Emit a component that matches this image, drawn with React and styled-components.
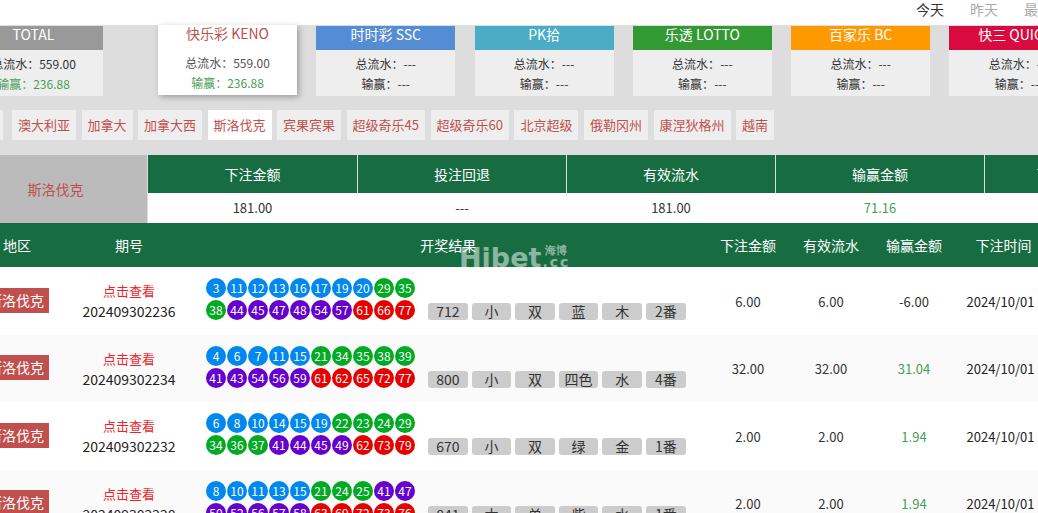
import React from "react"
import styled, { createGlobalStyle } from "styled-components"

const GlobalStyle = createGlobalStyle`
  html, body {
    margin: 0;
    padding: 0;
    background: #fff;
    overflow: hidden;
  }
  body {
    font-family: "Noto Sans CJK SC", "Noto Sans", sans-serif;
    font-size: 13px;
    color: #222;
  }
`

const Viewport = styled.div`
  height: 513px;
  overflow: hidden;
  position: relative;
  width: 1038px;
`

// The page is wider than the window and scrolled a little to the right.
const Page = styled.div`
  margin-left: -36px;
  width: 1300px;
`

const DateTabs = styled.div`
  display: flex;
  font-size: 14px;
  gap: 26px;
  height: 25px;
  line-height: 18px;
  padding-left: 952px;
`

const DateTab = styled.div`
  color: ${(p) => (p.$active ? "#333" : "#aaa")};
  white-space: nowrap;
`

const Summary = styled.div`
  background: #ddd;
  height: 130px;
`

const Cards = styled.div`
  display: flex;
  gap: 19.3px;
  height: 85px;
`

const Card = styled.div`
  background: ${(p) => (p.$active ? "#fff" : "#eee")};
  box-shadow: ${(p) => (p.$active ? "2px 2px 6px rgba(0, 0, 0, 0.3)" : "none")};
  flex: 0 0 139px;
  height: 70px;
  margin-right: ${(p) => (p.$first ? "35.7px" : "0")};
  margin-top: ${(p) => (p.$active ? "0" : "1px")};
  text-align: center;
`

const CardTitle = styled.div`
  background: ${(p) => p.$color || "transparent"};
  color: ${(p) => (p.$color ? "#fff" : "#c0504d")};
  font-size: 14px;
  height: 24px;
  line-height: ${(p) => (p.$color ? "17px" : "16px")};
  white-space: nowrap;
`

const CardLine = styled.div`
  color: ${(p) => (p.$win ? "#4a9e55" : p.$active ? "#555" : "#333")};
  font-size: 12px;
  height: 20px;
  line-height: 20px;
  margin-top: ${(p) => (p.$lead ? "4px" : "0")};
`

const Regions = styled.div`
  display: flex;
  gap: 5.5px;
  padding-left: 1px;
`

const Region = styled.div`
  background: ${(p) => (p.$active ? "#fff" : "#eee")};
  color: #c0504d;
  font-size: 13px;
  height: 30px;
  line-height: 30px;
  padding: 0 6px;
  white-space: nowrap;

  &:first-child {
    margin-right: 3.5px;
  }
`

const Totals = styled.div`
  display: grid;
  grid-template-columns: 184px 210px repeat(3, 209px) 160px;
  height: 68px;
`

const TotalsName = styled.div`
  align-items: center;
  background: #bbb;
  border-right: 1px solid #ddd;
  color: #c0504d;
  display: flex;
  font-size: 14px;
  grid-row: span 2;
  justify-content: center;
`

const TotalsHead = styled.div`
  background: #176d41;
  border-right: 1px solid #ddd;
  color: #fff;
  font-size: 14px;
  height: 38px;
  line-height: 38px;
  text-align: center;
`

const TotalsValue = styled.div`
  color: ${(p) => (p.$win ? "#4a9e55" : "#333")};
  font-size: 13px;
  height: 30px;
  line-height: 30px;
  padding-right: 1px;
  text-align: center;
`

const columns = "106px 118px 518.5px 83px 83px 83px 130px"

const TableHead = styled.div`
  background: #176d41;
  color: #fff;
  display: grid;
  font-size: 14px;
  grid-template-columns: ${columns};
  height: 44px;
  line-height: 44px;
  text-align: center;
`

const HeadResult = styled.div`
  padding-left: 2px;
`

const HeadTime = styled.div`
  padding-left: 20px;
  text-align: left;
`

const Row = styled.div`
  align-items: center;
  background: ${(p) => (p.$alt ? "#fafafa" : "#fff")};
  display: grid;
  grid-template-columns: ${columns};
  height: 67.5px;
  text-align: center;
`

const AreaTag = styled.div`
  background: #c0504d;
  color: #fff;
  font-size: 14px;
  height: 25px;
  line-height: 25px;
  margin: 0 0 1px 19px;
  width: 66px;
`

const PeriodCell = styled.div`
  line-height: 20px;
  padding-top: 1px;
`

const ViewLink = styled.div`
  color: #f01f2a;
  font-size: 13px;
`

const PeriodNo = styled.div`
  color: #222;
  font-size: 14px;
`

const ResultCell = styled.div`
  align-items: flex-end;
  display: flex;
  padding-bottom: 3px;
  padding-left: 18px;
`

const BallGrid = styled.div`
  display: grid;
  gap: 2px 1px;
  grid-template-columns: repeat(10, 20px);
  margin-right: 13px;
  width: 209px;
`

const Ball = styled.span`
  background: ${(p) => p.$color};
  border-radius: 50%;
  color: #fff;
  font-size: 12px;
  height: 20px;
  line-height: 20px;
  text-align: center;
  width: 20px;
`

const Tags = styled.div`
  display: flex;
  gap: 4px;
`

const Tag = styled.span`
  background: #ccc;
  border-radius: 3px;
  color: #333;
  font-size: 14px;
  height: 17px;
  line-height: 17px;
  text-align: center;
  width: 39.6px;
`

const Amount = styled.div`
  color: ${(p) => (p.$win ? "#4a9e55" : "#333")};
  font-size: 13px;
  padding-top: 1px;
`

const TimeCell = styled.div`
  font-size: 13px;
  padding-left: 11px;
  padding-top: 1px;
  text-align: left;
  white-space: nowrap;
`

const Watermark = styled.div`
  align-items: flex-start;
  color: rgba(255, 255, 255, 0.5);
  display: flex;
  font-family: "DejaVu Sans", sans-serif;
  font-size: 27px;
  font-weight: 700;
  left: 459px;
  line-height: 24px;
  pointer-events: none;
  position: absolute;
  top: 246px;
`

const WatermarkSide = styled.div`
  font-size: 11px;
  line-height: 13px;
  margin-left: 1px;
  margin-top: -2px;
  text-align: center;
`

const WatermarkDomain = styled.div`
  font-size: 14px;
  letter-spacing: 2px;
  line-height: 11px;
`

const ballColor = (n) => {
  if (n <= 20) return "#0088ee"
  if (n <= 40) return "#00aa22"
  if (n <= 60) return "#6600cc"
  return "#e60000"
}

const cards = [
  { title: "TOTAL", color: "#999999", flow: "559.00", win: "236.88", first: true },
  { title: "快乐彩 KENO", active: true, flow: "559.00", win: "236.88" },
  { title: "时时彩 SSC", color: "#548dd4", flow: "---", win: "---" },
  { title: "PK拾", color: "#4bacc6", flow: "---", win: "---" },
  { title: "乐透 LOTTO", color: "#339933", flow: "---", win: "---" },
  { title: "百家乐 BC", color: "#ff9900", flow: "---", win: "---" },
  { title: "快三 QUICK3", color: "#d90a3e", flow: "---", win: "---" },
]

const regions = [
  "台湾", "澳大利亚", "加拿大", "加拿大西", "斯洛伐克", "宾果宾果", "超级奇乐45",
  "超级奇乐60", "北京超级", "俄勒冈州", "康涅狄格州", "越南",
]

const totals = [
  { head: "下注金额", value: "181.00" },
  { head: "投注回退", value: "---" },
  { head: "有效流水", value: "181.00" },
  { head: "输赢金额", value: "71.16", win: true },
  { head: "下注笔数", value: "4" },
]

const rows = [
  {
    period: "202409302236",
    balls: [3, 11, 12, 13, 16, 17, 19, 20, 29, 35, 38, 44, 45, 47, 48, 54, 57, 61, 66, 77],
    tags: ["712", "小", "双", "蓝", "木", "2番"],
    bet: "6.00", valid: "6.00", win: "-6.00",
  },
  {
    period: "202409302234",
    balls: [4, 6, 7, 11, 15, 21, 34, 35, 38, 39, 41, 43, 54, 56, 59, 61, 62, 65, 72, 77],
    tags: ["800", "小", "双", "四色", "水", "4番"],
    bet: "32.00", valid: "32.00", win: "31.04", won: true,
  },
  {
    period: "202409302232",
    balls: [6, 8, 10, 14, 15, 19, 22, 23, 24, 29, 34, 36, 37, 41, 44, 45, 49, 62, 73, 79],
    tags: ["670", "小", "双", "绿", "金", "1番"],
    bet: "2.00", valid: "2.00", win: "1.94", won: true,
  },
  {
    period: "202409302228",
    balls: [8, 10, 11, 13, 15, 21, 24, 25, 41, 47, 50, 52, 56, 57, 58, 63, 69, 72, 73, 76],
    tags: ["841", "大", "单", "紫", "水", "1番"],
    bet: "2.00", valid: "2.00", win: "1.94", won: true,
  },
]

const App = () => (
  <Viewport>
    <GlobalStyle />
    <Page>
      <DateTabs>
        <DateTab $active>今天</DateTab>
        <DateTab>昨天</DateTab>
        <DateTab>最近七天</DateTab>
      </DateTabs>

      <Summary>
        <Cards>
          {cards.map((card) => (
            <Card key={card.title} $active={card.active} $first={card.first}>
              <CardTitle $color={card.color}>{card.title}</CardTitle>
              <CardLine $active={card.active} $lead>总流水：{card.flow}</CardLine>
              <CardLine $win={card.win !== "---"}>输赢：{card.win}</CardLine>
            </Card>
          ))}
        </Cards>
        <Regions>
          {regions.map((name) => (
            <Region key={name} $active={name === "斯洛伐克"}>{name}</Region>
          ))}
        </Regions>
      </Summary>

      <Totals>
        <TotalsName>斯洛伐克</TotalsName>
        {totals.map((item) => (
          <TotalsHead key={item.head}>{item.head}</TotalsHead>
        ))}
        {totals.map((item) => (
          <TotalsValue key={item.head} $win={item.win}>{item.value}</TotalsValue>
        ))}
      </Totals>

      <TableHead>
        <div>地区</div>
        <div>期号</div>
        <HeadResult>开奖结果</HeadResult>
        <div>下注金额</div>
        <div>有效流水</div>
        <div>输赢金额</div>
        <HeadTime>下注时间</HeadTime>
      </TableHead>

      {rows.map((row, index) => (
        <Row key={row.period} $alt={index % 2 === 1}>
          <AreaTag>斯洛伐克</AreaTag>
          <PeriodCell>
            <ViewLink>点击查看</ViewLink>
            <PeriodNo>{row.period}</PeriodNo>
          </PeriodCell>
          <ResultCell>
            <BallGrid>
              {row.balls.map((n) => (
                <Ball key={n} $color={ballColor(n)}>{n}</Ball>
              ))}
            </BallGrid>
            <Tags>
              {row.tags.map((tag) => (
                <Tag key={tag}>{tag}</Tag>
              ))}
            </Tags>
          </ResultCell>
          <Amount>{row.bet}</Amount>
          <Amount>{row.valid}</Amount>
          <Amount $win={row.won}>{row.win}</Amount>
          <TimeCell>2024/10/01 12:30:45</TimeCell>
        </Row>
      ))}
    </Page>

    <Watermark>
      Hibet
      <WatermarkSide>
        海博
        <WatermarkDomain>.cc</WatermarkDomain>
      </WatermarkSide>
    </Watermark>
  </Viewport>
)

export default App
